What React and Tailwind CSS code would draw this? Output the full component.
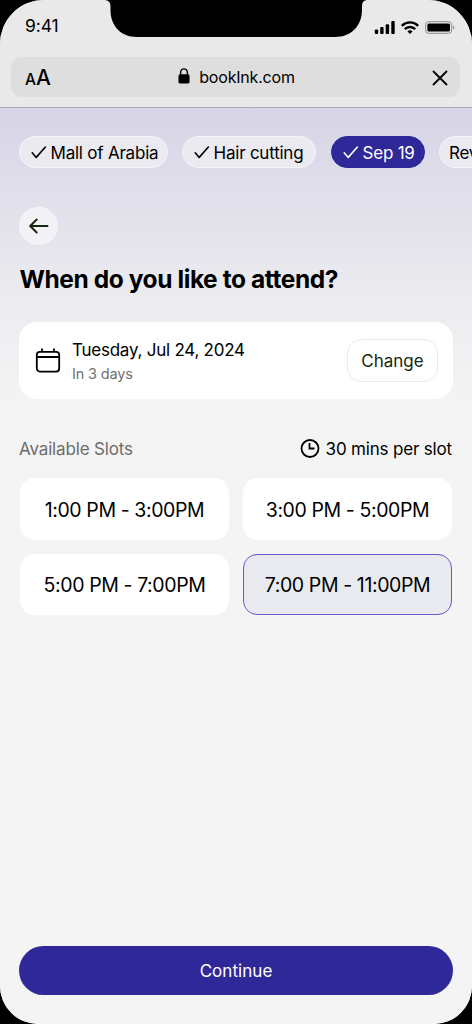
import React, { useState } from "react";

const steps = [
    { label: "Mall of Arabia", done: true, width: "w-[149px]" },
    { label: "Hair cutting", done: true, width: "w-[134px]" },
    { label: "Sep 19", done: true, active: true, width: "w-[94px]" },
    { label: "Review", done: false, width: "w-[78px]" },
];

const slots = ["1:00 PM - 3:00PM", "3:00 PM - 5:00PM", "5:00 PM - 7:00PM", "7:00 PM - 11:00PM"];

const CheckIcon = () => (
    <svg width="16" height="14" viewBox="0 0 16 14" fill="none" stroke="currentColor" strokeWidth="1.6" strokeLinecap="round" strokeLinejoin="round" className="shrink-0">
        <path d="M1.200 7.800L5.200 12.400L14.400 2" />
    </svg>
);

const StatusBar = () => (
    <div className="relative h-[57px] flex justify-between">
        <span className="ml-[25px] mt-[14px] text-[17.5px] leading-6 tracking-[-0.1px]">9:41</span>

        {/* Notch */}
        <svg className="absolute left-[104px] top-0" width="264" height="37" viewBox="0 0 264 37">
            <path d="M0 0H264C260 0 258 2 258 6V10C258 26 247 37 231 37H33C17 37 6.500 26 6.500 10V6C6.500 2 4 0 0 0Z" fill="#000" />
        </svg>

        <div className="flex items-start gap-[6px] mr-[17px] mt-[21px]">
            <svg width="21" height="13" viewBox="0 0 21 13" fill="#000">
                <rect x="0.800" y="8.500" width="3.400" height="4.500" rx="1" />
                <rect x="6.200" y="6" width="3.400" height="7" rx="1" />
                <rect x="11.700" y="3.200" width="3.400" height="9.800" rx="1" />
                <rect x="17.300" y="0" width="3.400" height="13" rx="1" />
            </svg>
            <svg width="18" height="13" viewBox="0 0 18 13" fill="none" stroke="#000" strokeWidth="2.400">
                <path d="M0.800 4.800C5.500 0.200 12.500 0.200 17.200 4.800" />
                <path d="M3.800 8.100C6.700 5.200 11.300 5.200 14.200 8.100" />
                <path d="M9 13L6.300 10.300C7.800 8.900 10.200 8.900 11.700 10.300Z" fill="#000" stroke="none" />
            </svg>
            <svg width="30" height="13" viewBox="0 0 30 13" fill="none">
                <rect x="0.700" y="0.700" width="26" height="11.600" rx="3" stroke="#8a8a8a" />
                <rect x="2.400" y="2.400" width="22.600" height="8.200" rx="1.500" fill="#000" />
                <path d="M28.200 4.500C29.800 5.200 29.800 7.800 28.200 8.500Z" fill="#8a8a8a" />
            </svg>
        </div>
    </div>
);

const AddressBar = () => (
    <div className="ml-[11px] mr-[12px] h-10 pl-[14px] pr-[12px] rounded-[11px] bg-[#dedede] flex items-center justify-between">
        <div className="w-8 mt-[3px] flex items-baseline font-[450] leading-6">
            <span className="text-[15.5px]">A</span>
            <span className="text-[21px]">A</span>
        </div>
        <div className="flex items-center gap-[9px]">
            <svg width="12" height="16" viewBox="0 0 12 16" className="mb-[3px]">
                <path d="M2.600 7V4.500C2.600 -0.300 9.400 -0.300 9.400 4.500V7" fill="none" stroke="#000" strokeWidth="1.400" />
                <rect x="0.500" y="6.300" width="11" height="9.200" rx="1.500" fill="#000" />
            </svg>
            <span className="text-[16px] tracking-[-0.2px]">bookInk.com</span>
        </div>
        <div className="w-8 mt-px flex justify-end">
            <svg width="16" height="16" viewBox="0 0 16 16" fill="none" stroke="#000" strokeWidth="1.800" strokeLinecap="round">
                <path d="M1.500 1.500L14.500 14.500M14.500 1.500L1.500 14.500" />
            </svg>
        </div>
    </div>
);

const App = () => {
    const [selected, setSelected] = useState(3);

    return (
        <div className="w-[472px] h-[1024px] bg-black overflow-hidden" style={{ fontFamily: 'Inter, "Liberation Sans", sans-serif' }}>
            <div className="h-full flex flex-col overflow-hidden rounded-t-[44px] rounded-b-[38px] bg-[#f4f4f4] text-black">
                <header className="h-[108px] shrink-0 bg-[#e9e9e9] border-b border-[#aaa9b5]">
                    <StatusBar />
                    <AddressBar />
                </header>

                <main className="flex-1 flex flex-col px-[19px] pt-7 pb-[29px] bg-[linear-gradient(to_bottom,#d6d4e6_0px,#e4e3ec_120px,#ecedf0_200px,#f4f4f4_300px)]">
                    {/* Booking steps */}
                    <div className="-mr-[19px] flex gap-[14px] overflow-hidden">
                        {steps.map(step => (
                            <div
                                key={step.label}
                                className={`${step.width} h-8 shrink-0 flex items-center gap-1 rounded-full border text-[17px] leading-6 tracking-[-0.22px] whitespace-nowrap ${step.done ? "pl-[10.5px]" : "pl-[9px]"} ${step.active ? "ml-px bg-[#2f2899] border-[#2f2899] text-white" : "bg-[#eaeaf0] border-[#f4f4f8]"}`}
                            >
                                {step.done && <CheckIcon />}
                                <span className="mt-[2px]">{step.label}</span>
                            </div>
                        ))}
                    </div>

                    <button className="mt-[39px] w-[39px] h-[38px] shrink-0 rounded-full bg-[#f2f2f6] border border-[#f6f6f9] flex items-center justify-center">
                        <svg width="20" height="16" viewBox="0 0 20 16" fill="none" stroke="#17260f" strokeWidth="1.900" strokeLinecap="round" strokeLinejoin="round">
                            <path d="M18.500 8H1.500M7.700 1.500L1.200 8L7.700 14.500" />
                        </svg>
                    </button>

                    <h1 className="ml-[0.5px] mt-[18px] text-[24.5px] leading-8 font-bold tracking-[-0.42px] whitespace-nowrap">When do you like to attend?</h1>

                    {/* Selected date */}
                    <div className="mt-[27px] h-[77px] shrink-0 pl-4 pr-[15px] rounded-[18px] bg-white flex items-center">
                        <svg width="26" height="26" viewBox="0 0 26 26" fill="none" stroke="#000" strokeWidth="1.800" strokeLinecap="round">
                            <rect x="1.800" y="3.800" width="22.400" height="19.800" rx="3" />
                            <path d="M2 9H24M7 1.200V3.400M19 1.200V3.400" />
                        </svg>
                        <div className="ml-[11px] mt-[2px] flex-1 whitespace-nowrap">
                            <div className="text-[17px] leading-6 tracking-[-0.24px]">Tuesday, Jul 24, 2024</div>
                            <div className="text-[14.500px] leading-6 tracking-[-0.15px] text-[#727272]">In 3 days</div>
                        </div>
                        <button className="w-[91px] h-[43px] pt-[2px] rounded-[14px] border border-[#ebebeb] text-[17px] text-[#17260f]">Change</button>
                    </div>

                    <div className="mt-[38px] flex items-center justify-between text-[17px] leading-6 whitespace-nowrap">
                        <span className="tracking-[-0.15px] text-[#6c6c6c]">Available Slots</span>
                        <span className="mr-px flex items-center gap-[6px] tracking-[-0.17px]">
                            <svg width="20" height="20" viewBox="0 0 20 20" fill="none" stroke="#000" strokeWidth="1.800">
                                <circle cx="10" cy="9.500" r="8.500" />
                                <path d="M9.500 4V9.500H14.500" />
                            </svg>
                            30 mins per slot
                        </span>
                    </div>

                    <div className="mx-px mt-[17px] grid grid-cols-2 gap-[14px]">
                        {slots.map((slot, i) => (
                            <button
                                key={slot}
                                onClick={() => setSelected(i)}
                                className={`${i < 2 ? "h-[62px]" : "h-[61px]"} pt-px rounded-[14px] border text-[19.500px] leading-7 tracking-[-0.4px] whitespace-nowrap ${selected === i ? "bg-[#e9eaef] border-[#6a58ca]" : "bg-white border-white"}`}
                            >
                                {slot}
                            </button>
                        ))}
                    </div>

                    <button className="mt-auto h-[49px] pt-[2px] shrink-0 rounded-full bg-[#2f2899] text-[17px] tracking-[0.05px] text-white">Continue</button>
                </main>
            </div>
        </div>
    );
};

export default App;
